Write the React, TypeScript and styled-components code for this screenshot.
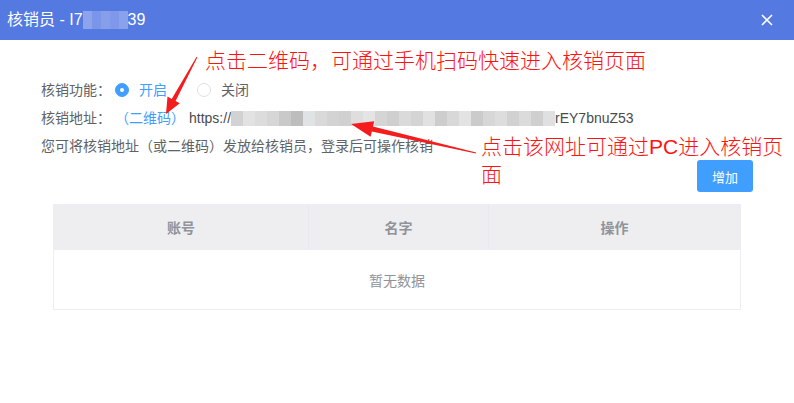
import styled, { createGlobalStyle } from "styled-components";

const GlobalStyle = createGlobalStyle`
  html, body {
    margin: 0;
    padding: 0;
    background: #ffffff;
  }
  body {
    font-family: "Liberation Sans", "Noto Sans CJK SC", sans-serif;
  }
`;

const Dialog = styled.div`
  position: relative;
  width: 794px;
  height: 403px;
  background: #ffffff;
  overflow: hidden;
`;

const Header = styled.div`
  height: 40px;
  background: #5479e1;
  display: flex;
  align-items: center;
  justify-content: space-between;
  padding: 0 20px 0 7px;
  box-sizing: border-box;
`;

const Title = styled.div`
  display: flex;
  align-items: center;
  color: #ffffff;
  font-size: 16px;
  line-height: 20px;
  white-space: pre;
`;

const Mosaic = styled.span`
  display: inline-flex;
  align-items: center;
`;

const Cell = styled.span<{ $w: number; $h: number; $c: string }>`
  display: inline-block;
  width: ${(p) => p.$w}px;
  height: ${(p) => p.$h}px;
  background: ${(p) => p.$c};
`;

const CloseButton = styled.button`
  border: none;
  background: transparent;
  padding: 0;
  width: 14px;
  height: 14px;
  display: flex;
  align-items: center;
  justify-content: center;
  cursor: pointer;
`;

const Body = styled.div`
  padding: 36px 41px 0;
  font-size: 14px;
  color: #606266;
`;

const FormRow = styled.div`
  display: flex;
  align-items: center;
  height: 28px;
  line-height: 28px;
  white-space: nowrap;
`;

const Label = styled.span`
  width: 74px;
  flex-shrink: 0;
`;

const RadioItem = styled.label`
  display: inline-flex;
  align-items: center;
  margin-right: 30px;
  cursor: pointer;
`;

const RadioDot = styled.span<{ $checked?: boolean }>`
  width: 14px;
  height: 14px;
  border-radius: 50%;
  box-sizing: border-box;
  border: 1px solid ${(p) => (p.$checked ? "#409eff" : "#dcdfe6")};
  background: ${(p) => (p.$checked ? "#409eff" : "#ffffff")};
  display: flex;
  align-items: center;
  justify-content: center;

  &::after {
    content: "";
    width: 4px;
    height: 4px;
    border-radius: 50%;
    background: #ffffff;
    display: ${(p) => (p.$checked ? "block" : "none")};
  }
`;

const RadioText = styled.span<{ $checked?: boolean }>`
  padding-left: 10px;
  color: ${(p) => (p.$checked ? "#409eff" : "#606266")};
`;

const QrLink = styled.a`
  color: #409eff;
  text-decoration: none;
  cursor: pointer;
`;

const Url = styled.span`
  display: inline-flex;
  align-items: center;
  margin-left: 4px;
  color: #4a4a4a;
`;

const Hint = styled.div`
  height: 28px;
  line-height: 28px;
  white-space: nowrap;
`;

const Toolbar = styled.div`
  display: flex;
  justify-content: flex-end;
`;

const AddButton = styled.button`
  height: 32px;
  padding: 0 15px;
  border: none;
  border-radius: 3px;
  background: #409eff;
  color: #ffffff;
  font-size: 13px;
  font-family: inherit;
  cursor: pointer;
`;

const Table = styled.div`
  margin: 12px 12px 0;
  border: 1px solid #ebeef5;
`;

const TableHead = styled.div`
  display: grid;
  grid-template-columns: 255px 180px 1fr;
  background: #eeeef0;
  height: 44px;
`;

const HeadCell = styled.div<{ $last?: boolean }>`
  display: flex;
  align-items: center;
  justify-content: center;
  font-weight: bold;
  color: #909399;
  border-right: ${(p) => (p.$last ? "none" : "1px solid #e8e9ee")};
`;

const Empty = styled.div`
  height: 59px;
  border-top: 1px solid #ebeef5;
  display: flex;
  align-items: center;
  justify-content: center;
  color: #909399;
`;

const Note = styled.div<{ $left: number; $top: number; $width: number }>`
  position: absolute;
  left: ${(p) => p.$left}px;
  top: ${(p) => p.$top}px;
  width: ${(p) => p.$width}px;
  color: #ff1212;
  font-size: 21px;
  font-weight: 300;
  line-height: 28px;
`;

const Arrows = styled.svg`
  position: absolute;
  left: 0;
  top: 0;
  pointer-events: none;
`;

const titleBlur = ["#8ca4ec", "#7b95e8", "#879fea", "#7f98e9", "#8aa2ec"];

const urlBlur = [
  "#d2d2d2", "#e2e2e2", "#dcdcdc", "#d6d6d6", "#c9c9c9", "#bdbdbd", "#dfe3e3",
  "#d9d9d9", "#d3d3d3", "#d0d0d0", "#dedede", "#e4e4e4", "#d5d5d5", "#cfcfcf",
  "#dadada", "#d4d4d4", "#e1e1e1", "#cdcdcd", "#d8d8d8", "#e3e3e3", "#cbcbcb",
  "#d7d7d7", "#dddddd", "#d1d1d1", "#dbdbdb", "#cfcfcf", "#e0e0e0",
];

// arrow as a tapering shaft with a triangular head
function arrowPoints(
  tail: [number, number],
  tip: [number, number],
  head: number,
  wing: number,
  shaftEnd: number,
  shaftStart: number
) {
  const dx = tip[0] - tail[0];
  const dy = tip[1] - tail[1];
  const len = Math.hypot(dx, dy);
  const ux = dx / len;
  const uy = dy / len;
  const nx = -uy;
  const ny = ux;
  const bx = tip[0] - head * ux;
  const by = tip[1] - head * uy;
  const pts = [
    [tail[0] + shaftStart * nx, tail[1] + shaftStart * ny],
    [bx + shaftEnd * nx, by + shaftEnd * ny],
    [bx + wing * nx, by + wing * ny],
    tip,
    [bx - wing * nx, by - wing * ny],
    [bx - shaftEnd * nx, by - shaftEnd * ny],
    [tail[0] - shaftStart * nx, tail[1] - shaftStart * ny],
  ];
  return pts.map((p) => `${p[0].toFixed(1)},${p[1].toFixed(1)}`).join(" ");
}

const App = () => {
  return (
    <Dialog>
      <GlobalStyle />
      <Header>
        <Title>
          核销员 - I7
          <Mosaic>
            {titleBlur.map((c, i) => (
              <Cell key={i} $w={9} $h={18} $c={c} />
            ))}
          </Mosaic>
          39
        </Title>
        <CloseButton aria-label="close">
          <svg width="12" height="12" viewBox="0 0 12 12">
            <path d="M1 1 L11 11 M11 1 L1 11" stroke="#fff" strokeWidth="1.6" />
          </svg>
        </CloseButton>
      </Header>

      <Body>
        <FormRow>
          <Label>核销功能：</Label>
          <RadioItem>
            <RadioDot $checked />
            <RadioText $checked>开启</RadioText>
          </RadioItem>
          <RadioItem>
            <RadioDot />
            <RadioText>关闭</RadioText>
          </RadioItem>
        </FormRow>
        <FormRow>
          <Label>核销地址：</Label>
          <QrLink>（二维码）</QrLink>
          <Url>
            https://
            <Mosaic>
              {urlBlur.map((c, i) => (
                <Cell key={i} $w={12} $h={15} $c={c} />
              ))}
            </Mosaic>
            rEY7bnuZ53
          </Url>
        </FormRow>
        <Hint>您可将核销地址（或二维码）发放给核销员，登录后可操作核销</Hint>
        <Toolbar>
          <AddButton>增加</AddButton>
        </Toolbar>
        <Table>
          <TableHead>
            <HeadCell>账号</HeadCell>
            <HeadCell>名字</HeadCell>
            <HeadCell $last>操作</HeadCell>
          </TableHead>
          <Empty>暂无数据</Empty>
        </Table>
      </Body>

      <Note $left={205} $top={47} $width={570}>
        点击二维码，可通过手机扫码快速进入核销页面
      </Note>
      <Note $left={481} $top={133} $width={306}>
        点击该网址可通过PC进入核销页面
      </Note>

      <Arrows width="794" height="403">
        <polygon
          fill="#f41c1c"
          points={arrowPoints([197, 57], [166, 114], 16, 7, 2.2, 0.5)}
        />
        <polygon
          fill="#f41c1c"
          points={arrowPoints([476, 153], [351, 124], 22, 8, 2.6, 0.6)}
        />
      </Arrows>
    </Dialog>
  );
};

export default App;
